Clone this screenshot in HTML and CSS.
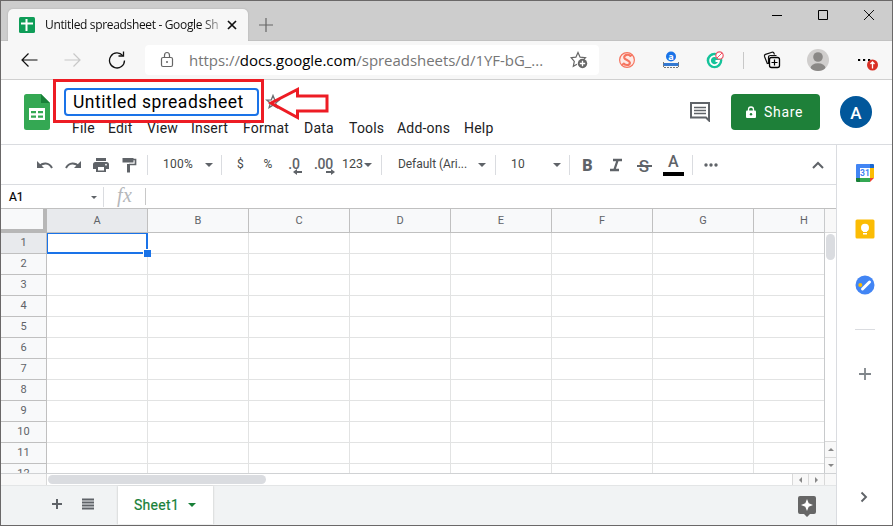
FILE: index.html
```html
<!DOCTYPE html>
<html lang="en">
<head>
<meta charset="utf-8">
<title>Untitled spreadsheet - Google Sheets</title>
<link rel="stylesheet" href="styles.css">
</head>
<body>
<div class="window">
  <div class="tabstrip">
    <div class="tab">
      <svg class="favicon" width="16" height="16"><rect width="16" height="16" rx="1.5" fill="#0f9d58"/><path d="M7.500 2v12M2 6.500h12" stroke="#fff" stroke-width="2"/></svg>
      <span class="tab-title">Untitled spreadsheet - Google Sh</span>
      <svg class="tab-close" width="10" height="10"><path d="M1 1l8 8M9 1l-8 8" stroke="#111" stroke-width="1.700"/></svg>
    </div>
    <svg class="newtab" width="16" height="16"><path d="M8 1v14M1 8h14" stroke="#666" stroke-width="1.200"/></svg>
    <div class="controls">
      <svg width="12" height="12"><path d="M1 6.500h10" stroke="#000"/></svg>
      <svg width="12" height="12"><path d="M1.500 1.500h9v9h-9z" fill="none" stroke="#000"/></svg>
      <svg width="12" height="12"><path d="M1 1l10 10M11 1L1 11" stroke="#111"/></svg>
    </div>
  </div>

  <div class="navbar">
    <svg width="18" height="18"><path d="M17.500 9H2M8.500 2.500L2 9l6.500 6.500" fill="none" stroke="#111" stroke-width="1.200"/></svg>
    <svg class="forward" width="18" height="18"><path d="M.5 9H16M9.500 2.500L16 9l-6.500 6.500" fill="none" stroke="#c8c8c8" stroke-width="1.200"/></svg>
    <svg class="reload" width="18" height="18"><path d="M16.500 9.500A7.500 7.500 0 1 1 14.800 4.700" fill="none" stroke="#111" stroke-width="1.300"/><path d="M10.500 5h5V0.500" fill="none" stroke="#111" stroke-width="1.300"/></svg>
    <div class="address">
      <svg class="lock" width="14" height="18"><rect x="1.500" y="6.500" width="11" height="9" rx="1.500" fill="none" stroke="#666" stroke-width="1.200"/><path d="M4.500 6V4.500a2.500 3 0 0 1 5 0V6" fill="none" stroke="#666" stroke-width="1.200"/><circle cx="7" cy="11" r="1" fill="#666"/></svg>
      <span class="url">https://<b>docs.google.com</b>/spreadsheets/d/1YF-bG_...</span>
      <svg class="fav" width="18" height="18"><path d="M7 13.200l-3.700 2.100 1-5L1.200 6.700l4.700-.5L8 1.500l2.100 4.700 5.400.5-1.500 1.500" fill="none" stroke="#666" stroke-width="1.200"/><circle cx="12.500" cy="12.500" r="4.700" fill="#666"/><path d="M12.500 9.800v5.400M9.800 12.500h5.400" stroke="#fff" stroke-width="1.300"/></svg>
    </div>
    <svg class="ext1" width="18" height="18"><circle cx="9" cy="9" r="7.400" fill="#fdeae6" stroke="#f5745f" stroke-width="1.200"/><path d="M12.800 5.500C11 2.500 5.500 3.800 6.300 6.800c.7 2.200 5.200 2.200 5.600 4.800.3 2.900-4.900 3.300-6.700.4" fill="none" stroke="#f5745f" stroke-width="2.200"/><path d="M4 14l2-2M12 5.500l2-1.500" stroke="#f5745f" stroke-width="1.200"/></svg>
    <svg class="ext2" width="18" height="18"><circle cx="9" cy="5.500" r="5" fill="#1a73e8"/><text x="9" y="8.500" class="ext-a">a</text><rect x="1" y="12" width="16" height="3" fill="#3478d0"/><path d="M1.500 11v6M16.500 11v6M2 16.500h14" stroke="#777" stroke-dasharray="2 1"/></svg>
    <svg class="ext3" width="18" height="18"><circle cx="8.500" cy="9.500" r="7.800" fill="#15c39a"/><path d="M11.500 6.200A4.500 4.500 0 1 0 13 10H9.500" fill="none" stroke="#fff" stroke-width="1.800"/><circle cx="13.500" cy="4.500" r="3.700" fill="#fff" stroke="#ef5567" stroke-width="1.200"/><path d="M11 7l5-5" stroke="#ef5567"/></svg>
    <i class="nav-sep"></i>
    <svg class="collections" width="18" height="18"><path d="M4.500 13L1.500 5.500Q1 4 2.500 3.400L9 1.300q1.500-.5 2 1l.5 1.200M5.500 13V6.500q0-2 2-2h6" fill="none" stroke="#111" stroke-width="1.200"/><rect x="6.500" y="6.500" width="10" height="10" rx="2" fill="#f7f7f7" stroke="#000" stroke-width="1.300"/><path d="M11.500 8.500v6M8.500 11.500h6" stroke="#000" stroke-width="1.200"/></svg>
    <svg class="profile" width="22" height="22"><clipPath id="pc"><circle cx="11" cy="11" r="11"/></clipPath><g clip-path="url(#pc)"><rect width="22" height="22" fill="#d0cecd"/><circle cx="11" cy="8" r="4.800" fill="#8a8886"/><ellipse cx="11" cy="19" rx="7.500" ry="4.700" fill="#8a8886"/></g></svg>
    <svg class="more" width="22" height="18"><path d="M1 9h2.200M6 9h2.200M11 9h2.200" stroke="#000" stroke-width="2"/><circle cx="15.500" cy="14" r="5.500" fill="#d93025"/><path d="M15.500 17.500v-6M13.500 13l2-2 2 2" fill="none" stroke="#fff" stroke-width="1.300"/></svg>
  </div>

  <header class="doc-header">
    <svg class="sheets-logo" width="26" height="36"><path d="M2.500 0H17l9 9v24.500A2.500 2.500 0 0 1 23.500 36h-21A2.500 2.500 0 0 1 0 33.500v-31A2.500 2.500 0 0 1 2.500 0z" fill="#34a853"/><path d="M17 0l9 9h-9z" fill="#188038"/><rect x="5" y="14" width="16" height="12" fill="#fff"/><path d="M7 17h5v2.300H7zM14 17h5v2.300h-5zM7 21.500h5v2.300H7zM14 21.500h5v2.300h-5z" fill="#34a853"/></svg>
    <div class="doc-main">
      <div class="title-row">
        <div class="title-input">Untitled spreadsheet</div>
        <svg width="16" height="16"><path d="M8 1.500l1.700 4.300 4.600.3-3.600 3 1.200 4.500L8 11.100l-3.900 2.500 1.200-4.500-3.600-3 4.600-.3z" fill="none" stroke="#6b6e72" stroke-width="1.300"/></svg>
      </div>
      <nav class="menu"><span>File</span><span>Edit</span><span>View</span><span>Insert</span><span>Format</span><span>Data</span><span>Tools</span><span>Add-ons</span><span>Help</span></nav>
    </div>
    <svg class="comments" width="20" height="20"><path d="M1 1h18v17.500L16 15.500H1z" fill="none" stroke="#5f6368" stroke-width="2"/><path d="M4 5.500h12M4 8.500h12M4 11.500h12" stroke="#5f6368" stroke-width="1.700"/></svg>
    <div class="share"><svg width="10" height="13"><rect y="4.500" width="10" height="7.500" rx="1" fill="#fff"/><path d="M2.500 5V3.500a2.500 2.500 0 0 1 5 0V5" fill="none" stroke="#fff" stroke-width="1.300"/><circle cx="5" cy="8.200" r="1.200" fill="#1e8039"/></svg><span>Share</span></div>
    <div class="avatar">A</div>
    <div class="mark-box"></div>
    <svg class="mark-arrow" width="64" height="36"><path d="M5 18L31.500 4.500v6.500h29.500v15H31.500v6.500z" fill="none" stroke="#ed1c24" stroke-width="3"/></svg>
  </header>

  <div class="body">
    <main class="main">
      <div class="toolbar">
        <i></i>
        <svg width="18" height="18"><path d="M3 10.500C6.500 6.500 13 6 16 12" fill="none" stroke="#5f6368" stroke-width="2"/><path d="M1 5v7h7z" fill="#5f6368"/></svg>
        <svg width="18" height="18"><path d="M15 10.500C11.500 6.500 5 6 2 12" fill="none" stroke="#5f6368" stroke-width="2"/><path d="M17 5v7h-7z" fill="#5f6368"/></svg>
        <svg width="18" height="18"><path d="M4 2h10v3H4zM3.500 6h11a2.500 2.500 0 0 1 2.500 2.500V13h-3v3H4v-3H1V8.500A2.500 2.500 0 0 1 3.500 6z" fill="#5f6368"/><path d="M6 11h6v3.500H6z" fill="#fff"/><circle cx="14" cy="8.700" r=".9" fill="#fff"/></svg>
        <svg width="18" height="18"><path d="M2.500 2h11v4.500h-11z" fill="#5f6368"/><path d="M13 3.500h2.500v5H9" fill="none" stroke="#5f6368" stroke-width="1.700"/><path d="M7 8h3v8.500H7z" fill="#5f6368"/></svg>
        <b></b><span>100%</span><em></em>
        <b></b><span>$</span><span>%</span>
        <span class="dec">.0<svg width="9" height="6"><path d="M9 3H3" stroke="#5f6368" stroke-width="2"/><path d="M0 3l4-3v6z" fill="#5f6368"/></svg></span>
        <span class="dec">.00<svg width="9" height="6"><path d="M0 3h6" stroke="#5f6368" stroke-width="2"/><path d="M9 3L5 0v6z" fill="#5f6368"/></svg></span>
        <span class="fmt">123</span><em></em>
        <b></b><span class="font">Default (Ari...</span><em></em>
        <b></b><span class="size">10</span><em></em>
        <b></b><span class="bold">B</span>
        <svg class="italic" width="14" height="14"><path d="M4 2h9M1 12h9M8.700 2L5.300 12" fill="none" stroke="#5f6368" stroke-width="2.300"/></svg>
        <span class="strike">S</span>
        <span class="color">A</span>
        <b></b><svg width="16" height="6"><g fill="#5f6368"><circle cx="3" cy="3" r="1.700"/><circle cx="8" cy="3" r="1.700"/><circle cx="13" cy="3" r="1.700"/></g></svg>
        <svg class="collapse" width="14" height="10"><path d="M2 8l5-5 5 5" fill="none" stroke="#5f6368" stroke-width="2"/></svg>
      </div>
      <div class="formula"><span class="cell-ref">A1</span><em></em><b></b><span class="fx">fx</span><b class="short"></b></div>
      <div class="sheet">
        <div class="cells" id="cells"></div>
        <div class="vscroll"><div class="vhead"></div><div class="vtrack"><div class="vthumb"></div></div><div class="sbtn"><u class="up"></u></div><div class="sbtn"><u class="down"></u></div></div>
      </div>
      <div class="hscroll"><div class="hcorner"></div><div class="htrack"><div class="hthumb"></div></div><div class="hbtn"><u class="left"></u></div><div class="hbtn"><u class="right"></u></div><div class="hbtn last"></div></div>
      <footer class="sheetbar">
        <svg class="add" width="12" height="12"><path d="M6 1v10M1 6h10" stroke="#5f6368" stroke-width="2"/></svg>
        <svg class="all" width="12" height="12"><path d="M0 1.500h12M0 4.500h12M0 7.500h12M0 10.500h12" stroke="#5f6368" stroke-width="2"/></svg>
        <div class="sheet-tab">Sheet1<em></em></div>
        <svg class="explore" width="18" height="22"><path d="M2 1h14a2 2 0 0 1 2 2v14a2 2 0 0 1-2 2h-4l-3 3-3-3H2a2 2 0 0 1-2-2V3a2 2 0 0 1 2-2z" fill="#666"/><path d="M9 4l1.700 4.300L15 10l-4.300 1.700L9 16l-1.700-4.300L3 10l4.300-1.700z" fill="#fff"/></svg>
      </footer>
    </main>
    <aside class="side">
      <svg class="cal" width="20" height="20"><path d="M2 1h13v4H5v10H1V2a1 1 0 0 1 1-1z" fill="#4285f4"/><path d="M15 1h3a1 1 0 0 1 1 1v3h-4z" fill="#1967d2"/><path d="M15 5h4v10h-4z" fill="#fbbc04"/><path d="M5 15h10v4H5z" fill="#34a853"/><path d="M1 15h4v4H2a1 1 0 0 1-1-1z" fill="#188038"/><path d="M15 15h4l-4 4z" fill="#ea4335"/><path d="M5 5h10v10H5z" fill="#fff"/><text x="10" y="13.200" class="cal-day">31</text></svg>
      <svg class="keep" width="20" height="20"><rect x=".5" y=".5" width="19" height="19" rx="1.500" fill="#fbbc04"/><circle cx="10" cy="8.700" r="4" fill="#fff"/><path d="M8 11h4v2H8zM8 14h4v1.500H8z" fill="#fff"/></svg>
      <svg class="tasks" width="20" height="20"><circle cx="10" cy="10" r="9.500" fill="#4285f4"/><path d="M7.500 14l7-7" stroke="#fff" stroke-width="3" stroke-linecap="round"/><circle cx="5.300" cy="10" r="2" fill="#fbbc04"/></svg>
      <i class="divider"></i>
      <svg class="plus" width="12" height="12"><path d="M6 0v12M0 6h12" stroke="#80868b" stroke-width="1.800"/></svg>
      <svg class="expand" width="8" height="12"><path d="M1.500 1.500L6 6l-4.500 4.500" fill="none" stroke="#5f6368" stroke-width="1.900"/></svg>
    </aside>
  </div>
</div>
<script src="sheet.js"></script>
</body>
</html>
```
FILE: styles.css
```css
* { box-sizing: border-box; }
body { margin: 0; font-family: Roboto, "Liberation Sans", sans-serif; color: #202124; }
svg { display: block; flex: none; }
em { width: 0; height: 0; border: 4px solid transparent; border-top-color: #5f6368; border-bottom: 0; flex: none; }
.window { width: 893px; height: 526px; border: 1px solid #6a6868; background: #fff; overflow: hidden; display: flex; flex-direction: column; }

.tabstrip { height: 40px; flex: none; background: #cdcdcd; display: flex; padding: 8px 17px 0 7px; box-shadow: inset 0 -1px #c2c2c2; }
.tab { width: 240px; height: 32px; background: #f7f7f7; border-radius: 5px 5px 0 0; display: flex; align-items: center; padding: 0 12px 0 11px; box-shadow: 0 0 2px #aaa; clip-path: inset(-2px -2px 0 -2px); }
.tab-title { margin-left: 10px; width: 173px; white-space: nowrap; font: 12px/20px "Open Sans", sans-serif; letter-spacing: -.34px; color: #111; -webkit-mask-image: linear-gradient(90deg, #000 90%, transparent 106%); mask-image: linear-gradient(90deg, #000 90%, transparent 106%); }
.tab-close { margin-left: 9px; }
.newtab { margin: 8px 0 0 10px; }
.controls { display: flex; gap: 34px; margin-left: auto; }

.navbar { height: 39px; flex: none; background: #f7f7f7; border-bottom: 1px solid #d0d0d0; display: flex; align-items: center; padding-left: 19px; }
.forward { margin-left: 26px; }
.reload { margin-left: 26px; }
.address { width: 454px; height: 30px; margin: 0 19px 0 19px; background: #fff; border-radius: 4px; display: flex; align-items: center; padding: 0 10px 0 15px; }
.url { margin-left: 15px; font: 15px/24px "Open Sans", sans-serif; letter-spacing: -.04px; color: #767676; white-space: nowrap; width: 372px; }
.url b { font-weight: 400; color: #000; }
.fav { margin-left: 9px; }
.ext2 { margin-left: 26px; }
.ext3 { margin-left: 26px; }
.ext-a { font: bold 9px "Open Sans", sans-serif; fill: #fff; text-anchor: middle; }
.nav-sep { width: 1px; height: 17px; background: #c8c8c8; margin-left: 19px; }
.collections { margin-left: 19px; }
.profile { margin-left: 26px; }
.more { margin-left: 28px; overflow: visible; }

.doc-header { height: 65px; flex: none; display: flex; position: relative; border-bottom: 1px solid #dadce0; padding: 8px 20px 0 23px; }
.sheets-logo { margin-top: 6px; }
.doc-main { width: 640px; margin-left: 14px; }
.title-row { display: flex; align-items: center; gap: 6px; }
.title-input { width: 195px; height: 28px; border: 2px solid #1a73e8; border-radius: 4px; padding-left: 7px; font: 17.500px/24px Roboto, sans-serif; letter-spacing: .5px; color: #000; white-space: nowrap; }
.menu { display: grid; grid-template-columns: 36px 39px 44px 52px 61px 45px 48px 67px 40px; margin: 3px 0 0 8px; font-size: 14px; line-height: 18px; letter-spacing: .2px; }
.comments { margin: 14px 0 0 -14px; }
.share { width: 89px; height: 36px; background: #1e8039; border-radius: 4px; margin: 6px 0 0 21px; color: #fff; display: flex; align-items: center; gap: 8px; padding-left: 15px; font-size: 14px; letter-spacing: .7px; }
.avatar { width: 32px; height: 32px; border-radius: 50%; background: #01579b; color: #fff; margin: 8px 0 0 20px; text-align: center; font: 500 17px/34px Roboto, sans-serif; }
.mark-box { position: absolute; left: 52px; top: -1px; width: 211px; height: 44px; border: 3px solid #ed1c24; }
.mark-arrow { position: absolute; left: 265px; top: 5px; }

.body { flex: 1; display: flex; min-height: 0; }
.main { width: 835px; display: flex; flex-direction: column; }
.toolbar { height: 40px; flex: none; border-bottom: 1px solid #dadce0; display: grid; align-items: center; justify-items: center; color: #444746; font-size: 12px; letter-spacing: .2px;
  grid-template-columns: 30px 28px 28px 28px 28px 9px 52px 9px 17px 21px 34px 18px 41px 15px 18px 9px 93px 6px 21px 45px 12px 13px 23px 34px 22px 37px 1px 36px 96px; }
.toolbar b { width: 1px; height: 20px; background: #dadce0; }
.toolbar span { line-height: 16px; white-space: nowrap; margin-top: -1px; }
.toolbar .dec { position: relative; font-size: 14px; font-weight: 500; color: #5f6368; letter-spacing: -.2px; }
.dec svg { position: absolute; right: -2px; bottom: -3px; }
.toolbar .fmt { font-size: 12.500px; margin-right: -4px; justify-self: end; letter-spacing: 0; }
.toolbar .font { letter-spacing: -.05px; }
.toolbar .size { justify-self: start; margin-left: 5px; }
.toolbar .bold { font: 900 16px/18px Roboto, sans-serif; color: #5f6368; margin-top: 2px; }
.toolbar .italic { margin-top: 1px; }
.toolbar .strike { font: 500 17px/18px Roboto, sans-serif; color: #5f6368; width: 15px; margin-top: 2px; text-align: center; background: linear-gradient(#5f6368, #5f6368) 0 8px / 15px 2px no-repeat; }
.toolbar .color { width: 21px; height: 23px; margin-top: 0; border-bottom: 4px solid #000; text-align: center; font: 500 16px/17px Roboto, sans-serif; color: #5f6368; }
.toolbar .collapse { justify-self: end; }
.formula { height: 24px; flex: none; border-bottom: 1px solid #c0c0c0; display: flex; align-items: center; padding-left: 8px; }
.cell-ref { width: 82px; font-size: 12px; color: #000; -webkit-text-stroke: .2px #000; }
.formula em { border-width: 3.500px; border-bottom: 0; margin-top: 1px; }
.formula b { width: 1px; height: 20px; background: #dadce0; margin-left: 6px; }
.fx { width: 25px; margin: -3px 0 0 13px; font: italic 20px/20px "Liberation Serif", serif; color: #b5b7ba; letter-spacing: .5px; }
.formula .short { margin-left: 3px; height: 17px; background: #c8c8c8; }

.sheet { height: 264px; flex: none; display: flex; }
.cells { width: 824px; overflow: hidden; border-right: 1px solid #c8cacc; }
.row { display: grid; grid-template-columns: 46px repeat(8, 101px); height: 21px; }
.row > div { border-right: 1px solid #e2e3e3; border-bottom: 1px solid #e2e3e3; position: relative; }
.row > div:first-child { border-color: #c0c0c0; background: #f8f9fa; text-align: center; font-size: 11px; line-height: 19px; color: #5f6368; }
.row.head { height: 24px; }
.row.head > div { background: #f8f9fa; border-color: #c0c0c0; text-align: center; font-size: 11px; line-height: 23px; color: #5f6368; }
.row.head > .corner { border-right: 4px solid #b7b7b7; border-bottom: 4px solid #b7b7b7; }
.row > div.on:first-child, .row.head > div.on { background: #e8eaed; }
.row > .cursor { z-index: 1; }
.cursor::before { content: ""; position: absolute; inset: 0 -1px -1px 0; border: 1px solid #1a73e8; border-right-width: 2px; border-bottom-width: 2px; }
.cursor::after { content: ""; position: absolute; right: -4px; bottom: -4px; width: 7px; height: 7px; background: #1a73e8; border: solid #fff; border-width: 1px 0 0 1px; }
.vscroll { width: 11px; display: flex; flex-direction: column; }
.vhead { height: 24px; background: #f8f8f8; border-bottom: 1px solid #d9d9d9; }
.vtrack { flex: 1; padding: 1px; }
.vthumb { width: 9px; height: 26px; border-radius: 5px; background: #dadce0; }
.sbtn { height: 16px; background: #f8f8f8; border-top: 1px solid #d9d9d9; display: grid; place-items: center; }
u { width: 0; height: 0; border: 3px solid transparent; }
.up { border-top: 0; border-bottom-color: #888; }
.down { border-bottom: 0; border-top-color: #888; }
.left { border-left: 0; border-right-color: #888; }
.right { border-right: 0; border-left-color: #888; }
.hscroll { height: 12px; flex: none; border-top: 1px solid #d0d2d4; display: flex; }
.hcorner { width: 46px; background: #f8f8f8; border-right: 1px solid #d9d9d9; }
.htrack { flex: 1; padding: 1px; }
.hthumb { width: 218px; height: 9px; border-radius: 5px; background: #dadce0; }
.hbtn { width: 16px; background: #f8f8f8; border-left: 1px solid #d9d9d9; display: grid; place-items: center; }
.hbtn.last { width: 12px; }
.sheetbar { flex: 1; background: #f1f3f4; border-top: 1px solid #e3e5e6; display: flex; align-items: center; padding-left: 50px; }
.sheetbar > svg { margin-top: -3px; }
.all { margin-left: 19px; }
.sheet-tab { width: 95px; height: 39px; margin: -1px 0 0 24px; background: #fff; box-shadow: 0 0 2px #bbb; clip-path: inset(0 -3px); color: #188038; font-size: 14px; line-height: 36px; letter-spacing: .3px; display: flex; align-items: center; padding: 0 0 1px 16px; -webkit-text-stroke: .2px #188038; }
.sheet-tab em { border-top-color: #188038; margin-left: 9px; }
.sheetbar > .explore { margin: 0 20px 0 auto; }

.side { flex: 1; border-left: 1px solid #dadce0; display: flex; flex-direction: column; align-items: center; padding-top: 18px; }
.keep, .tasks { margin-top: 36px; }
.divider { width: 20px; height: 1px; background: #dadce0; margin-top: 34px; }
.plus { margin-top: 38px; }
.expand { margin: 111px 2px 0 0; }
.cal-day { font: bold 8.500px Roboto, sans-serif; fill: #4285f4; text-anchor: middle; }
```
FILE: sheet.js
```js
const cells = document.getElementById('cells');
const letters = 'ABCDEFGH'.split('');
const add = (parent, cls, text) => {
  const el = document.createElement('div');
  if (cls) el.className = cls;
  if (text) el.textContent = text;
  parent.append(el);
  return el;
};
const head = add(cells, 'row head');
add(head, 'corner');
letters.forEach((l, i) => add(head, i ? '' : 'on', l));
for (let n = 1; n <= 12; n++) {
  const row = add(cells, 'row');
  add(row, n === 1 ? 'on' : '', String(n));
  letters.forEach((l, i) => add(row, n === 1 && i === 0 ? 'cursor' : ''));
}
```
